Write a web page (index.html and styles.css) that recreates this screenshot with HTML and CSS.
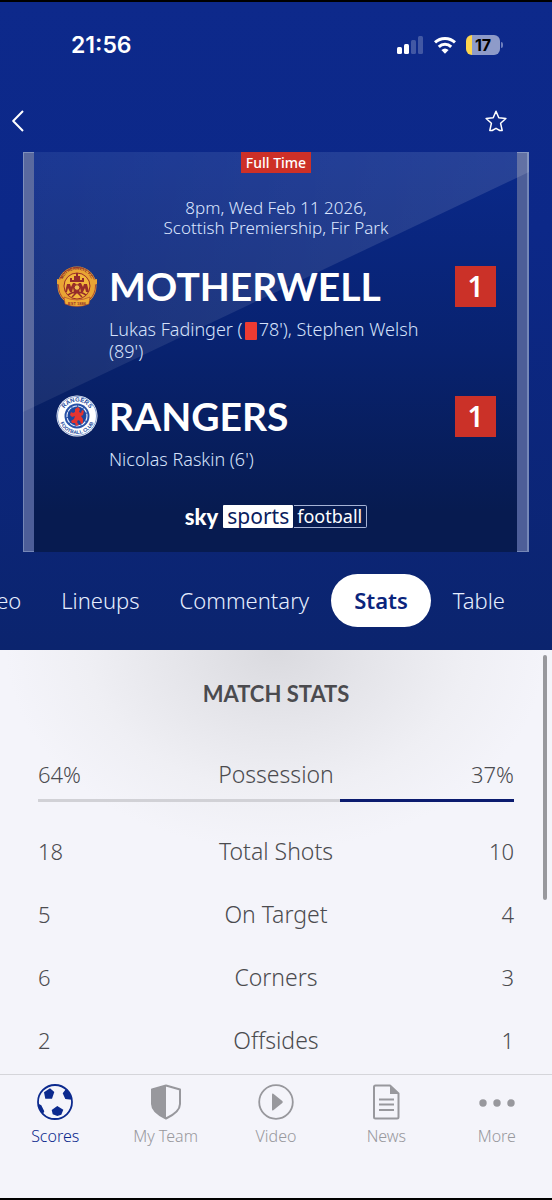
FILE: index.html
```html
<!DOCTYPE html>
<html lang="en">
<head>
<meta charset="utf-8">
<meta name="viewport" content="width=device-width, initial-scale=1">
<title>Motherwell v Rangers - Match stats</title>
<link rel="stylesheet" href="styles.css">
</head>
<body>
<div class="app">
  <header class="hero">
    <div class="status">
      <time class="clock">21:56</time>
      <div class="indicators">
        <svg class="signal" viewBox="0 0 27 18" aria-label="Signal"><g fill="#fff"><rect x="0" y="11" width="5" height="7" rx="1.5"/><rect x="7" y="8" width="5" height="10" rx="1.5"/><g opacity=".22"><rect x="14" y="4" width="5" height="14" rx="1.5"/><rect x="21" y="0" width="5" height="18" rx="1.5"/></g></g></svg>
        <svg class="wifi" viewBox="0 0 22 18" aria-label="Wi-Fi"><g fill="none" stroke="#fff" stroke-width="3"><path d="M1 6.4A14.5 14.5 0 0 1 21 6.4"/><path d="M4.8 10.8A9 9 0 0 1 17.2 10.8"/></g><path d="M7.4 14a5.5 5.500 0 0 1 7.200 0L11 17.800z" fill="#fff"/></svg>
        <div class="battery"><span class="level">17</span></div>
      </div>
    </div>
    <div class="toolbar">
      <button class="icon-button" aria-label="Back"><svg class="back" viewBox="0 0 12 22"><path d="M11 1 1.200 11 11 21"/></svg></button>
      <button class="icon-button" aria-label="Favourite"><svg class="star" viewBox="0 0 22 22"><path d="M11 1.300l2.800 6.500 7.100.7-5.300 4.800 1.600 7.200H14.800L11 18.300 7.200 20.500H4.800l1.600-7.200L1.100 8.500l7.100-.7z"/></svg></button>
    </div>
    <section class="scorecard">
      <div class="gloss"></div>
      <div class="card-body">
        <span class="full-time">Full Time</span>
        <p class="fixture">8pm, Wed Feb 11 2026,<br>Scottish Premiership, Fir Park</p>
        <div class="team">
          <svg class="badge" viewBox="0 0 42 42" aria-label="Motherwell badge">
            <defs><path id="mTop" d="M5.500 20a15.500 15.500 0 0 1 31 0"/></defs>
            <circle cx="21" cy="21" r="19.500" fill="#e9a534"/><circle cx="21" cy="21" r="18.500" fill="none" stroke="#9a3030" stroke-width=".8"/>
            <path d="M1 14l5 1-1 5-4-1zM41 14l-5 1 1 5 4-1z" fill="#e9a534"/>
            <circle cx="21" cy="21" r="13" fill="#f3b63c" stroke="#9a2d29"/>
            <path d="M14 17h14v-4h-2v2h-2v-4h-2V8h-2v3h-2v4h-2v-2h-2z" fill="#942b2b"/>
            <path d="M9 27l2-8h3l1 3 2-4h2l2 3 2-3h2l2 4 1-3h3l2 8h-3l-1-4-2 4h-2l-1-4-1 4h-5l-1-4-1 4h-2l-2-4-1 4z" fill="#982d29"/>
            <circle cx="21" cy="22.500" r="2.800" fill="#f1bd51" stroke="#942b2b"/>
            <path d="M12 30c5-4 13-4 18 0M16 32l5-5 5 5" fill="none" stroke="#942b2b" stroke-width="1.500"/>
            <path d="M8 32q13 6 26 0l-1 7q-12 5-24 0z" fill="#efad35" stroke="#a83d2b" stroke-width=".6"/>
            <text class="m-ring"><textPath href="#mTop" startOffset="50%">MOTHERWELL F.C.</textPath></text>
            <text class="m-est" x="21" y="39.500">EST 1886</text>
          </svg>
          <h1 class="name">Motherwell</h1>
          <span class="score">1</span>
          <p class="scorers">Lukas Fadinger (<span class="red-card" role="img" aria-label="red card"></span>78'), Stephen Welsh (89')</p>
        </div>
        <div class="team">
          <svg class="badge" viewBox="0 0 42 42" aria-label="Rangers badge">
            <defs><path id="rTop" d="M6.500 21a14.500 14.500 0 0 1 29 0"/><path id="rBottom" d="M3 21a18 18 0 0 0 36 0"/></defs>
            <circle cx="21" cy="21" r="20.500" fill="#fff"/><circle cx="21" cy="21" r="19.500" fill="none" stroke="#5477bc" stroke-width=".7"/>
            <circle cx="21" cy="21" r="12.500" fill="#2751a7"/><circle cx="21" cy="21" r="10" fill="none" stroke="#e9f0ff" stroke-width="1.100" stroke-dasharray="5 1"/>
            <circle cx="21" cy="21" r="8.800" fill="#1c479e"/>
            <path d="M19 14l3-2 2 2-1 3 2 1 1-3 2 1-1 4-2 1 2 3 0 4-2 1-1-3-2-1-1 2 2 3-3 1-1-3-3 0-1-2 3-2 1-3-3 1-2-2 1-3 2 1 2-1z" fill="#e3342f"/>
            <text class="r-ring"><textPath href="#rTop" startOffset="50%">RANGERS</textPath></text>
            <text class="r-ring r-club"><textPath href="#rBottom" startOffset="50%">FOOTBALL CLUB</textPath></text>
          </svg>
          <h1 class="name">Rangers</h1>
          <span class="score">1</span>
          <p class="scorers">Nicolas Raskin (6')</p>
        </div>
        <div class="brand"><b class="sky">sky</b><span class="sports">sports</span><span class="football">football</span></div>
      </div>
    </section>
    <nav class="tabs" aria-label="Match">
      <a class="tab" href="#video">Video</a><a class="tab" href="#lineups">Lineups</a><a class="tab" href="#commentary">Commentary</a><a class="tab active" href="#stats" aria-current="page">Stats</a><a class="tab" href="#table">Table</a>
    </nav>
  </header>
  <main class="stats" id="stats">
    <h2 class="heading">Match Stats</h2>
    <table class="stat-table">
      <tbody>
        <tr class="possession"><td>64%</td><th scope="row">Possession</th><td>37%</td></tr>
        <tr class="bar-row"><td colspan="3"><div class="bar"><div class="home" style="flex-grow:64"></div><div class="away" style="flex-grow:37"></div></div></td></tr>
        <tr><td>18</td><th scope="row">Total Shots</th><td>10</td></tr>
        <tr><td>5</td><th scope="row">On Target</th><td>4</td></tr>
        <tr><td>6</td><th scope="row">Corners</th><td>3</td></tr>
        <tr><td>2</td><th scope="row">Offsides</th><td>1</td></tr>
      </tbody>
    </table>
    <div class="thumb"></div>
  </main>
  <nav class="bottom" aria-label="Main">
    <a class="dest current" href="#scores"><svg class="dest-icon" viewBox="0 0 36 36"><defs><clipPath id="ball"><circle cx="18" cy="18" r="17"/></clipPath></defs><g fill="currentColor" clip-path="url(#ball)"><path d="M7 8.300 13 4.300 17.300 8 15 14.700H8.300zM14.700 26 20.300 22 26.300 25.700 24.300 30.700 20.300 32 15.700 30.300zM25.700 9.300 29.700 4 36 10V16L28.300 15zM0 19 4.300 21.300 7.300 27.300 5 32 0 30z"/></g><circle cx="18" cy="18" r="17" fill="none" stroke="currentColor" stroke-width="1.800"/></svg>Scores</a>
    <a class="dest" href="#team"><svg class="dest-icon" viewBox="0 0 36 36"><path d="M18 1.500 32 5.500V20q0 8-14 14.500Q4 28 4 20V5.500z" fill="none" stroke="currentColor" stroke-width="2" stroke-linejoin="round"/><path d="M18 1.500V34.500Q4 28 4 20V5.500z" fill="currentColor"/></svg>My Team</a>
    <a class="dest" href="#videos"><svg class="dest-icon" viewBox="0 0 36 36"><circle cx="18" cy="18" r="16.800" fill="none" stroke="currentColor" stroke-width="1.800"/><path d="M14 10.500q0-1.500 1.300-.8L24.300 17q1 1 0 2L15.300 26.300q-1.300.7-1.300-.8z" fill="currentColor"/></svg>Video</a>
    <a class="dest" href="#news"><svg class="dest-icon" viewBox="0 0 36 36"><path d="M7.500 1.500H22L30.500 9.500V33q0 1.500-1.500 1.500H7.500Q6 34.500 6 33V3Q6 1.500 7.500 1.500z" fill="none" stroke="currentColor" stroke-width="2" stroke-linejoin="round"/><path d="M22 1v9h9z" fill="currentColor"/><path d="M11 15.500h15M11 20.500h15M11 26h15" stroke="currentColor" stroke-width="2"/></svg>News</a>
    <a class="dest" href="#more"><svg class="dest-icon" viewBox="0 0 36 36"><g fill="currentColor"><circle cx="4" cy="19" r="3.700"/><circle cx="18" cy="19" r="3.700"/><circle cx="32" cy="19" r="3.700"/></g></svg>More</a>
  </nav>
</div>
</body>
</html>
```
FILE: styles.css
```css
* { box-sizing: border-box; }
body {
  margin: 0;
  background: #000;
  font-family: "Noto Sans", "Open Sans", sans-serif;
  font-weight: 300;
}
h1, h2, p { margin: 0; }
a { color: inherit; text-decoration: none; }
.app {
  min-height: 100vh;
  display: flex;
  flex-direction: column;
  border-top: 2px solid #000;
  border-bottom: 2px solid #000;
}
.hero {
  background: linear-gradient(#0d298b 0%, #0c2888 35%, #0b246e 100%);
  color: #fff;
}
.status {
  display: flex;
  justify-content: space-between;
  align-items: center;
  height: 86px;
  padding: 0 49px 0 71px;
}
.clock {
  font-family: Inter, sans-serif;
  font-size: 23px;
  font-weight: 600;
}
.indicators { display: flex; align-items: center; gap: 10px; }
.signal { width: 27px; height: 18px; }
.wifi { width: 22px; height: 18px; }
.battery {
  position: relative;
  width: 34px;
  height: 20px;
  margin-right: 3px;
  border-radius: 6px;
  background: linear-gradient(90deg, #fdd54d 6px, #8e9bc9 6px);
  color: #000;
  text-align: center;
}
.battery::after {
  content: "";
  position: absolute;
  left: 35px;
  top: 7px;
  width: 2px;
  height: 6px;
  border-radius: 0 3px 3px 0;
  background: #6d7fbd;
}
.level {
  display: block;
  font-family: Inter, sans-serif;
  font-size: 16px;
  font-weight: 700;
  line-height: 20px;
}
.toolbar {
  display: flex;
  justify-content: space-between;
  align-items: center;
  height: 64px;
  padding: 2px 45px 0 12px;
}
.icon-button {
  display: flex;
  padding: 0;
  border: 0;
  background: none;
  cursor: pointer;
}
.icon-button svg { fill: none; stroke: #fff; stroke-linejoin: round; }
.back { width: 12px; height: 22px; stroke-width: 2; }
.star { width: 22px; height: 22px; stroke-width: 1.5; }
.scorecard {
  position: relative;
  margin: 0 23px;
  background: linear-gradient(#0a298b, #08226f 50%, #071b50 90%);
}
.scorecard::before, .scorecard::after {
  content: "";
  position: absolute;
  top: 0;
  bottom: 0;
  width: 10px;
  background: #4d5e98;
  border: 1px solid #7587b7;
}
.scorecard::before { left: 0; border-right: 0; }
.scorecard::after { right: 0; border-left: 0; border-right-width: 2px; }
.gloss {
  position: absolute;
  inset: 0;
  z-index: 1;
  background: linear-gradient(90deg, rgba(255,255,255,.07), rgba(255,255,255,.12));
  clip-path: polygon(0 0, 100% 0, 100% 5%, 0 65%);
}
.card-body {
  position: relative;
  z-index: 2;
  display: flex;
  flex-direction: column;
  align-items: center;
  padding: 0 33px 24px;
}
.full-time {
  padding: 0 5px;
  background: #cd3027;
  font-size: 14px;
  font-weight: 500;
  line-height: 21px;
}
.fixture {
  margin-top: 25px;
  text-align: center;
  font-size: 17px;
  font-weight: 350;
  line-height: 20px;
  color: #dce6ff;
}
.team {
  align-self: stretch;
  display: grid;
  grid-template-columns: 42px 1fr 41px;
  column-gap: 11px;
  align-items: center;
  margin-top: 27px;
}
.team + .team { margin-top: 33px; }
.badge { width: 42px; height: 42px; }
.badge text { font-family: "Liberation Sans", sans-serif; font-weight: 700; text-anchor: middle; }
.m-ring { font-size: 4px; fill: #8a2b2b; }
.m-est { font-size: 4px; fill: #922d29; }
.r-ring { font-size: 6px; fill: #244b9e; }
.r-club { font-size: 5px; }
.name {
  font-family: Lato, sans-serif;
  font-size: 39px;
  font-weight: 700;
  line-height: 42px;
  text-transform: uppercase;
}
.score {
  background: #cb3128;
  text-align: center;
  font-size: 28px;
  font-weight: 600;
  line-height: 41px;
}
.scorers {
  grid-column: 2;
  margin-top: 11px;
  padding-right: 8px;
  font-size: 18px;
  line-height: 22px;
  color: #d6e2fb;
}
.red-card {
  display: inline-block;
  width: 12px;
  height: 18px;
  margin: 0 2px;
  border-radius: 1px;
  background: #ed3b32;
  vertical-align: -4px;
}
.brand {
  display: flex;
  align-items: center;
  margin-top: 35px;
  line-height: 22px;
}
.sky {
  margin-right: 5px;
  font-family: Lato, sans-serif;
  font-size: 22px;
  font-weight: 900;
}
.sports {
  padding: 0 4px 1px;
  border-radius: 1px;
  background: #fff;
  color: #0a205e;
  font-size: 21px;
  font-weight: 400;
}
.football {
  margin-left: 1px;
  padding: 0 4px 1px 3px;
  border: 1px solid #a6b3d6;
  border-left: 0;
  border-radius: 0 2px 2px 0;
  font-size: 18px;
  line-height: 20px;
  font-weight: 400;
}
.tabs {
  display: flex;
  justify-content: flex-end;
  overflow: hidden;
  padding: 22px 25px 23px 0;
}
.tab {
  flex: none;
  padding: 0 22px 0 18px;
  border-radius: 27px;
  font-size: 22px;
  line-height: 53px;
  color: #e6eeff;
}
.tab.active {
  padding: 0 23px;
  background: #fff;
  color: #0b247c;
  font-weight: 600;
}
.tab.active + .tab { padding-left: 22px; }
.stats {
  position: relative;
  flex: 1;
  padding: 23px 38px 3px;
  background: radial-gradient(ellipse 270px 200px at 50% 0, #dadadf, #e5e5ea 35%, #efeff4 70%, #f4f4fa);
  color: #4b4b4f;
}
.heading {
  font-family: Lato, sans-serif;
  font-size: 22px;
  font-weight: 700;
  line-height: 42px;
  text-align: center;
  text-transform: uppercase;
}
.stat-table {
  width: 100%;
  margin-top: 34px;
  border-collapse: collapse;
  table-layout: fixed;
  font-size: 22px;
}
.stat-table tr { height: 63px; }
.stat-table th, .stat-table td { padding: 0; line-height: 30px; font-weight: 300; }
.stat-table th { font-size: 23px; font-weight: 350; }
.stat-table td:last-child { text-align: right; }
.stat-table .possession { height: 50px; }
.stat-table .bar-row { height: 20px; }
.stat-table .bar-row td { line-height: 3px; vertical-align: top; }
.bar { display: flex; height: 3px; }
.home { background: #d1d1d6; }
.away { background: #0b1b6f; }
.thumb {
  position: absolute;
  top: 5px;
  right: 5px;
  width: 4px;
  height: 245px;
  border-radius: 2px;
  background: #98989d;
}
.bottom {
  display: grid;
  grid-template-columns: repeat(5, 1fr);
  padding: 9px 0 51px;
  border-top: 1px solid #d5d5da;
  background: #f4f4fa;
}
.dest {
  display: flex;
  flex-direction: column;
  align-items: center;
  gap: 5px;
  font-size: 16px;
  line-height: 22px;
  color: #98989d;
}
.dest.current { color: #0c2a8e; }
.dest-icon { width: 36px; height: 36px; }
```
